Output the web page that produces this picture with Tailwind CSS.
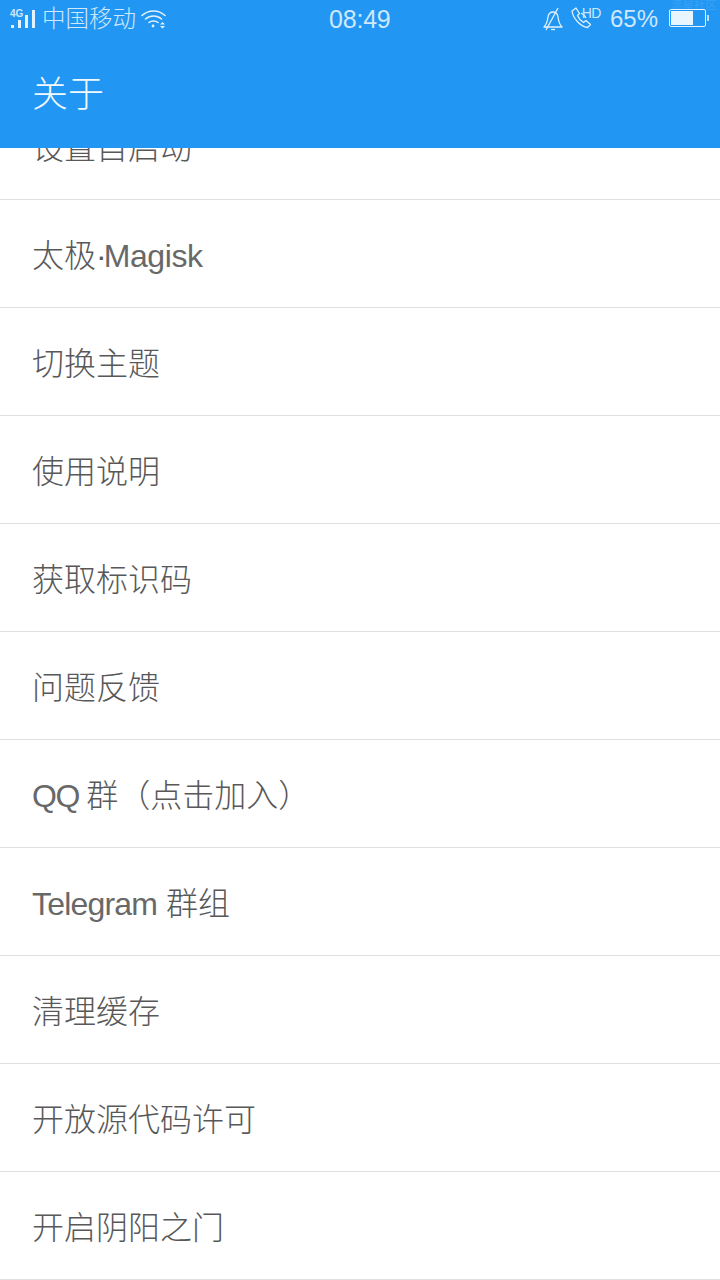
<!DOCTYPE html>
<html lang="zh-CN">
<head>
  <meta charset="UTF-8" />
  <meta name="viewport" content="width=device-width, initial-scale=1.0"/>
  <title>关于</title>
  <script src="https://cdn.jsdelivr.net/npm/@tailwindcss/browser@4"></script>
</head>
<body class="bg-white font-['Liberation_Sans','Noto_Sans_CJK_SC',sans-serif] [text-spacing-trim:space-all]">
  <div class="w-[720px] h-[1280px] overflow-hidden">
    <!-- status bar + title -->
    <div class="relative z-10 h-[148px] bg-[#2196f3] text-white">
      <span class="absolute left-[671px] top-0 text-[11px] leading-[11px] tracking-[0.5px] text-white/10">流星社区</span>
      <div class="h-[38px] flex items-center justify-between text-[#cfe8fc]">
        <div class="flex items-center pl-[10px]">
          <div class="relative w-[28px] h-[20px]">
            <span class="absolute left-0 top-[-1px] text-[10px] leading-[12px] font-bold">4G</span>
            <div class="absolute left-[1px] bottom-[1px] flex items-end gap-[4px]">
              <div class="w-[3px] h-[3px] bg-[#e3f2fd]"></div>
              <div class="w-[3px] h-[8px] bg-[#e3f2fd]"></div>
              <div class="w-[3px] h-[13px] bg-[#e3f2fd]"></div>
              <div class="w-[3px] h-[18px] bg-[#e3f2fd]"></div>
            </div>
          </div>
          <span class="ml-[4px] text-[23.5px] leading-[38px] font-light">中国移动</span>
          <svg class="ml-[5px]" width="26" height="20" viewBox="0 0 26 20" fill="none" stroke="#e3f2fd" stroke-width="1.6" stroke-linecap="round">
            <path d="M1 6.5 C7.5 0.5 17.5 0.5 24 6.5"/>
            <path d="M4.5 10 C9 6 16 6 20.5 10"/>
            <path d="M8 13.5 C10.5 11.5 14.5 11.5 17 13.5"/>
            <circle cx="12" cy="17" r="1.4" fill="#e3f2fd" stroke="none"/>
            <path d="M19 15.5 h5 l-2.5 -2.5 z M19 17 h5 l-2.5 2.5 z" fill="#e3f2fd" stroke="none"/>
          </svg>
        </div>
        <span class="absolute left-[329px] top-0 text-[25px] leading-[39px] tracking-[-0.2px]">08:49</span>
        <div class="flex items-center">
          <svg width="22" height="24" viewBox="0 0 22 24" fill="none" stroke="#e3f2fd" stroke-width="1.3" stroke-linejoin="round">
            <path d="M2 20 C5 17 5.5 14 6 10 C6.5 6.5 8.5 5 11 5 C13.5 5 15.5 6.5 16 10 C16.5 14 17 17 20 20 Z"/>
            <path d="M4 23 L16 1"/>
            <path d="M9 22.5 h4"/>
          </svg>
          <svg class="ml-[6px] -mt-[2px]" width="30" height="24" viewBox="0 0 30 24" fill="none" stroke="#e3f2fd" stroke-width="1.3" stroke-linejoin="round">
            <path d="M2 5 L6 2 L9.5 7.5 L7.5 9.5 C8.5 12 11 15 13.5 16.5 L16 14.5 L20.5 18.5 L17.5 21.5 C10 20.5 3 12 2 5 Z"/>
            <path d="M11 7 C13 8 15 10 16 12"/>
          </svg>
          <span class="ml-[-18px] mt-[-12px] text-[14px] leading-[16px] tracking-[-0.5px]">HD</span>
          <span class="ml-[9px] text-[24px] leading-[36px]">65%</span>
          <div class="ml-[11px] mr-[11px] -mt-[2px] flex items-center">
            <div class="w-[37px] h-[18px] border border-[#e3f2fd] rounded-[2px] p-[1px]">
              <div class="w-[22px] h-full bg-[#e8f4fe]"></div>
            </div>
            <div class="w-[2px] h-[6px] ml-[1px] bg-[#bbdefb]"></div>
          </div>
        </div>
      </div>
      <div class="h-[110px] pl-[32px] pt-[4px] flex items-center text-[36px] font-light text-[#f2f9ff]">关于</div>
    </div>

    <!-- settings list, scrolled so the first row sits under the header -->
    <ul class="-mt-[56px] text-[32px] text-[#585858] font-light">
      <li class="h-[108px] pl-[32px] pt-[4px] flex items-center border-b border-[#e0e0e0]">设置自启动</li>
      <li class="h-[108px] pl-[32px] pt-[4px] flex items-center border-b border-[#e0e0e0]"><span>太极<span class="tracking-[-3px]">·</span><span class="tracking-[-0.4px] text-[#686868]">Magisk</span></span></li>
      <li class="h-[108px] pl-[32px] pt-[4px] flex items-center border-b border-[#e0e0e0]">切换主题</li>
      <li class="h-[108px] pl-[32px] pt-[4px] flex items-center border-b border-[#e0e0e0]">使用说明</li>
      <li class="h-[108px] pl-[32px] pt-[4px] flex items-center border-b border-[#e0e0e0]">获取标识码</li>
      <li class="h-[108px] pl-[32px] pt-[4px] flex items-center border-b border-[#e0e0e0]">问题反馈</li>
      <li class="h-[108px] pl-[32px] pt-[4px] flex items-center border-b border-[#e0e0e0]"><span><span class="tracking-[-1.5px] text-[#686868]">QQ </span>群（点击加入）</span></li>
      <li class="h-[108px] pl-[32px] pt-[4px] flex items-center border-b border-[#e0e0e0]"><span><span class="tracking-[-0.8px] text-[#686868]">Telegram</span> 群组</span></li>
      <li class="h-[108px] pl-[32px] pt-[4px] flex items-center border-b border-[#e0e0e0]">清理缓存</li>
      <li class="h-[108px] pl-[32px] pt-[4px] flex items-center border-b border-[#e0e0e0]">开放源代码许可</li>
      <li class="h-[108px] pl-[32px] pt-[4px] flex items-center border-b border-[#e0e0e0]">开启阴阳之门</li>
    </ul>
  </div>
</body>
</html>
